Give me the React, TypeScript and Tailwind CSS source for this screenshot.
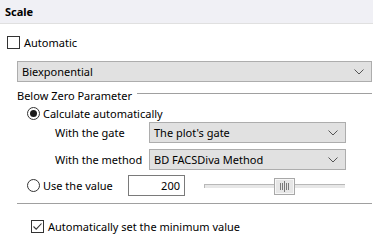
import React from 'react';

const Chevron = () => (
    <svg width="10" height="6" viewBox="0 0 10 6" className="shrink-0">
        <path d="M0.5 0.5 L5 5 L9.5 0.5" fill="none" stroke="#555" strokeWidth="1" />
    </svg>
);

const Select = ({ value, className }: { value: string; className: string }) => (
    <div
        className={`flex items-center justify-between h-[21px] bg-[#e1e1e1] border border-[#adadad] pl-[4px] pr-[7px] ${className}`}
    >
        <span>{value}</span>
        <Chevron />
    </div>
);

const Checkbox = ({ checked }: { checked: boolean }) => (
    <div className="w-[13px] h-[13px] border border-[#333] bg-white flex items-center justify-center shrink-0">
        {checked && (
            <svg width="11" height="11" viewBox="0 0 11 11">
                <path d="M1.5 5.5 L4.2 8.2 L9.5 2.5" fill="none" stroke="#333" strokeWidth="1.1" />
            </svg>
        )}
    </div>
);

const Radio = ({ checked }: { checked: boolean }) => (
    <div className="w-[13px] h-[13px] rounded-full border border-[#333] bg-white flex items-center justify-center shrink-0">
        {checked && <div className="w-[7px] h-[7px] rounded-full bg-[#1a1a1a]" />}
    </div>
);

const SliderThumb = () => (
    <svg width="21" height="17" viewBox="0 0 21 17" className="absolute left-[69px] top-[-7px]">
        <rect x="0.5" y="0.5" width="20" height="16" fill="#e6e6e6" stroke="#a8a8a8" />
        <rect x="1.5" y="1.5" width="18" height="14" fill="none" stroke="#f7f7f7" />
        <g stroke="#7a7a7a" strokeWidth="1">
            <path d="M6.5 5 V12" />
            <path d="M8.5 5 V12" />
            <path d="M10.5 3 V14" />
            <path d="M12.5 5 V12" />
            <path d="M14.5 5 V12" />
        </g>
    </svg>
);

export default function App() {
    return (
        <div className="w-[374px] h-[243px] bg-white text-[11px] text-black font-['Noto_Sans',sans-serif] leading-none whitespace-nowrap">
            <div className="w-[373px] h-[24px] bg-[#f0f0f5] border-b border-[#e0e0e0] px-[5px] flex items-center font-bold">
                Scale
            </div>

            <div className="flex items-center gap-[4px] ml-[7px] mt-[12px] h-[13px]">
                <Checkbox checked={false} />
                <span>Automatic</span>
            </div>

            <Select value="Biexponential" className="ml-[17px] w-[355px] mt-[12px]" />

            <div className="flex items-center ml-[17px] w-[355px] mt-[6px] h-[14px] gap-[5px]">
                <span>Below Zero Parameter</span>
                <div className="flex-1 h-px bg-[#a0a0a0] mb-[3px]" />
            </div>

            <div className="flex items-center gap-[3px] ml-[27px] mt-[4px] h-[14px]">
                <Radio checked />
                <span>Calculate automatically</span>
            </div>

            <div className="flex items-center ml-[55px] mt-[2px]">
                <span className="w-[94px]">With the gate</span>
                <Select value="The plot's gate" className="w-[197px]" />
            </div>

            <div className="flex items-center ml-[55px] mt-[6px]">
                <span className="w-[94px]">With the method</span>
                <Select value="BD FACSDiva Method" className="w-[197px]" />
            </div>

            <div className="flex items-center ml-[27px] mt-[5px] h-[21px]">
                <Radio checked={false} />
                <span className="ml-[3px] w-[85px]">Use the value</span>
                <div className="w-[57px] h-[21px] border border-[#7a7a7a] flex items-center justify-end pr-[4px]">
                    200
                </div>
                <div className="relative ml-[19px] w-[141px] h-[4px] border-t border-l border-[#b8b8b8] bg-[#e7e7e7]">
                    <SliderThumb />
                </div>
            </div>

            <div className="ml-[17px] w-[355px] h-px bg-[#a0a0a0] mt-[7px]" />

            <div className="flex items-center gap-[4px] ml-[31px] mt-[16px] h-[13px]">
                <Checkbox checked />
                <span>Automatically set the minimum value</span>
            </div>
        </div>
    );
}
